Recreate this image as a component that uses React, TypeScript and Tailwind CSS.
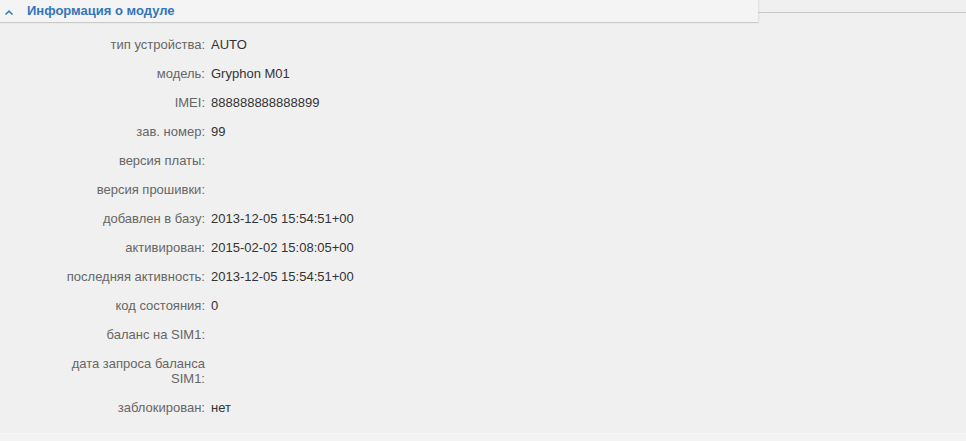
const rows: [string, string][] = [
  ['тип устройства:', 'AUTO'],
  ['модель:', 'Gryphon M01'],
  ['IMEI:', '888888888888899'],
  ['зав. номер:', '99'],
  ['версия платы:', ''],
  ['версия прошивки:', ''],
  ['добавлен в базу:', '2013-12-05 15:54:51+00'],
  ['активирован:', '2015-02-02 15:08:05+00'],
  ['последняя активность:', '2013-12-05 15:54:51+00'],
  ['код состояния:', '0'],
  ['баланс на SIM1:', ''],
  ['дата запроса баланса SIM1:', ''],
  ['заблокирован:', 'нет'],
];

export default function App() {
  return (
    <div className="w-[966px] h-[441px] bg-[#f0f0f0] overflow-hidden flex flex-col font-['Liberation_Sans',Arial,sans-serif]">
      <div className="flex items-start">
        <div className="w-[758px] h-[23px] bg-[#f4f4f4] border-b border-[#c9c9c9] shadow-[1px_0_2px_rgba(0,0,0,0.08)] flex items-center">
          <svg width="10" height="10" viewBox="0 0 10 10" className="ml-[4px] mr-[13px] mt-[3px]">
            <path d="M1.5 6.5 L5 3.2 L8.5 6.5" fill="none" stroke="#3a7bbf" strokeWidth="1.6" />
          </svg>
          <span className="text-[13px] font-bold text-[#3375bb]">Информация о модуле</span>
        </div>
        <div className="flex-1 mt-[12px] border-t border-[#c9c9c9]" />
      </div>

      <div className="pt-[14px] grid grid-cols-[206px_1fr] gap-y-[14px] text-[13px] leading-[15px]">
        {rows.map(([label, value]) => (
          <div key={label} className="contents">
            <div className="text-right text-[#666] pl-[64px] pr-[1px]">{label}</div>
            <div className="pl-[5px] text-[#333]">{value}</div>
          </div>
        ))}
      </div>

      <div className="mt-auto h-[8px] bg-[#f3f3f3] border-t border-[#f6f6f6]" />
    </div>
  );
}
